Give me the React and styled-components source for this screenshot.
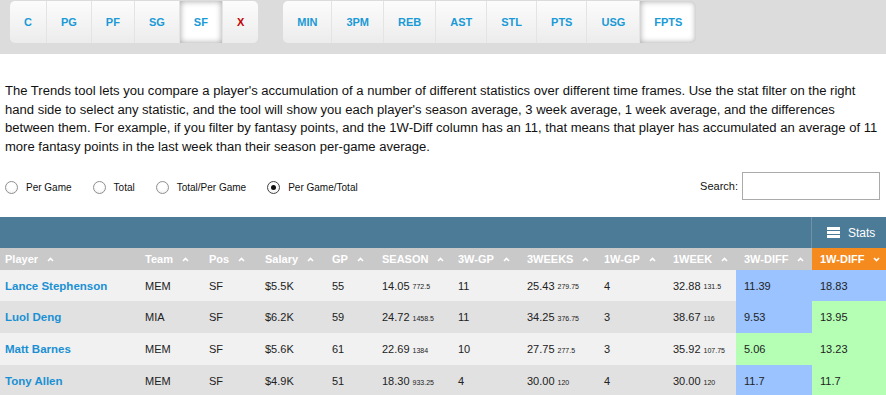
import React from "react";
import styled, { createGlobalStyle } from "styled-components";

const Global = createGlobalStyle`
  html, body { margin: 0; padding: 0; background: #fff; }
  body { font-family: "Liberation Sans", Arial, sans-serif; color: #222; }
  * { box-sizing: border-box; }
`;

const TopBar = styled.div`
  display: flex;
  gap: 25px;
  background: #dcdcdc;
  padding: 1px 10px 11px;
`;

const BtnGroup = styled.div`
  display: flex;
  height: 42px;
  border-radius: 5px;
  overflow: hidden;
  background: linear-gradient(#fcfcfc, #ececec);
`;

const SegBtn = styled.div`
  display: flex;
  align-items: center;
  justify-content: center;
  padding: 0 14px;
  font-size: 11px;
  font-weight: bold;
  color: ${(p) => (p.$danger ? "#c40000" : "#1a9ad6")};
  border-right: 1px solid #e4e4e4;
  background: ${(p) => (p.$active ? "#fff" : "transparent")};
  box-shadow: ${(p) => (p.$active ? "inset 0 0 6px rgba(0,0,0,0.38)" : "none")};
  &:last-child { border-right: none; }
`;

const Intro = styled.p`
  margin: 28px 3px 0 5px;
  font-size: 13.05px;
  line-height: 18.5px;
  color: #111;
`;

const Controls = styled.div`
  display: flex;
  align-items: center;
  justify-content: space-between;
  margin: 16px 6px 17px 5px;
  height: 28px;
`;

const RadioGroup = styled.div`
  display: flex;
  align-items: center;
  gap: 21px;
  padding-top: 3px;
`;

const RadioLabel = styled.label`
  display: flex;
  align-items: center;
  gap: 8px;
  font-size: 10px;
  color: #111;
`;

const Radio = styled.span`
  width: 13px;
  height: 13px;
  border-radius: 50%;
  border: 1px solid ${(p) => (p.$checked ? "#444" : "#909090")};
  background: radial-gradient(circle at 50% 40%, #fff 40%, #e8e8e8 100%);
  display: flex;
  align-items: center;
  justify-content: center;
  &::after {
    content: "";
    width: 5px;
    height: 5px;
    border-radius: 50%;
    background: ${(p) => (p.$checked ? "#111" : "transparent")};
  }
`;

const SearchWrap = styled.div`
  display: flex;
  align-items: center;
  gap: 4px;
  font-size: 11px;
  color: #111;
`;

const SearchInput = styled.input`
  width: 138px;
  height: 28px;
  border: 1px solid #aaa;
  padding: 2px 4px;
  outline: none;
`;

const TableBar = styled.div`
  display: flex;
  justify-content: flex-end;
  height: 31px;
  background: #4c7b98;
`;

const StatsBtn = styled.div`
  display: flex;
  align-items: center;
  gap: 8px;
  width: 75px;
  padding-left: 15px;
  border-left: 1px solid #6d93ab;
  color: #fff;
  font-size: 12px;
`;

const Grid = styled.div`
  display: grid;
  grid-template-columns: 137px 64px 56px 67px 50px 76px 69px 77px 69px 71px 76px 74px;
`;

const HeadCell = styled.div`
  display: flex;
  align-items: center;
  gap: 9px;
  height: 22px;
  padding-left: ${(p) => (p.$first ? "5px" : "8px")};
  background: ${(p) => (p.$sorted ? "#f58a1f" : "#c9c9c9")};
  color: #fff;
  font-size: 11px;
  font-weight: bold;
  white-space: nowrap;
`;

const Cell = styled.div`
  display: flex;
  align-items: center;
  height: ${(p) => p.$h};
  padding-left: ${(p) => (p.$first ? "5px" : "8px")};
  background: ${(p) =>
    p.$tone === "blue" ? "#9ac3ff" : p.$tone === "green" ? "#b4ffb4" : p.$odd ? "#e1e1e1" : "#f1f1f1"};
  font-size: 11px;
  color: #222;
  white-space: nowrap;
`;

const PlayerName = styled.span`
  color: #1a90d4;
  font-weight: bold;
  font-size: 11.5px;
`;

const Sub = styled.small`
  font-size: 7px;
  margin-left: 3px;
  position: relative;
  top: 1px;
`;

const Caret = ({ down }) => (
  <svg width="7" height="5" viewBox="0 0 7 5">
    <path
      d={down ? "M1 1 L3.5 3.5 L6 1" : "M1 4 L3.5 1.5 L6 4"}
      fill="none"
      stroke="#fff"
      strokeWidth="1.6"
    />
  </svg>
);

const BarsIcon = () => (
  <svg width="13" height="11" viewBox="0 0 13 11">
    <rect x="0" y="0" width="13" height="3" fill="#fff" />
    <rect x="0" y="4" width="13" height="3" fill="#fff" />
    <rect x="0" y="8" width="13" height="3" fill="#fff" />
  </svg>
);

const positions = ["C", "PG", "PF", "SG", "SF", "X"];
const stats = ["MIN", "3PM", "REB", "AST", "STL", "PTS", "USG", "FPTS"];
const headers = ["Player", "Team", "Pos", "Salary", "GP", "SEASON", "3W-GP", "3WEEKS", "1W-GP", "1WEEK", "3W-DIFF", "1W-DIFF"];

const rows = [
  ["Lance Stephenson", "MEM", "SF", "$5.5K", "55", ["14.05", "772.5"], "11", ["25.43", "279.75"], "4", ["32.88", "131.5"], ["11.39", "blue"], ["18.83", "blue"]],
  ["Luol Deng", "MIA", "SF", "$6.2K", "59", ["24.72", "1458.5"], "11", ["34.25", "376.75"], "3", ["38.67", "116"], ["9.53", "blue"], ["13.95", "green"]],
  ["Matt Barnes", "MEM", "SF", "$5.6K", "61", ["22.69", "1384"], "10", ["27.75", "277.5"], "3", ["35.92", "107.75"], ["5.06", "green"], ["13.23", "green"]],
  ["Tony Allen", "MEM", "SF", "$4.9K", "51", ["18.30", "933.25"], "4", ["30.00", "120"], "4", ["30.00", "120"], ["11.7", "blue"], ["11.7", "green"]],
];

const rowHeights = ["31px", "32px", "32px", "32px"];

const radios = ["Per Game", "Total", "Total/Per Game", "Per Game/Total"];

export default function App() {
  return (
    <>
      <Global />
      <TopBar>
        <BtnGroup>
          {positions.map((p) => (
            <SegBtn key={p} $active={p === "SF"} $danger={p === "X"}>{p}</SegBtn>
          ))}
        </BtnGroup>
        <BtnGroup>
          {stats.map((s) => (
            <SegBtn key={s} $active={s === "FPTS"}>{s}</SegBtn>
          ))}
        </BtnGroup>
      </TopBar>
      <Intro>
        The Trends tool lets you compare a player's accumulation of a number of different statistics over different time frames. Use the stat filter on the right hand side to select any statistic, and the tool will show you each player's season average, 3 week average, 1 week average, and the differences between them. For example, if you filter by fantasy points, and the 1W-Diff column has an 11, that means that player has accumulated an average of 11 more fantasy points in the last week than their season per-game average.
      </Intro>
      <Controls>
        <RadioGroup>
          {radios.map((r, i) => (
            <RadioLabel key={r}>
              <Radio $checked={i === 3} />
              {r}
            </RadioLabel>
          ))}
        </RadioGroup>
        <SearchWrap>
          Search:
          <SearchInput type="text" />
        </SearchWrap>
      </Controls>
      <TableBar>
        <StatsBtn>
          <BarsIcon />
          Stats
        </StatsBtn>
      </TableBar>
      <Grid>
        {headers.map((h, i) => (
          <HeadCell key={h} $first={i === 0} $sorted={h === "1W-DIFF"}>
            {h}
            <Caret down={h === "1W-DIFF"} />
          </HeadCell>
        ))}
        {rows.map((row, ri) =>
          row.map((v, ci) => {
            const h = rowHeights[ri];
            if (ci === 0)
              return (
                <Cell key={ci + "-" + ri} $first $odd={ri % 2 === 1} $h={h}>
                  <PlayerName>{v}</PlayerName>
                </Cell>
              );
            if (ci >= 10)
              return (
                <Cell key={ci + "-" + ri} $tone={v[1]} $h={h}>{v[0]}</Cell>
              );
            if (Array.isArray(v))
              return (
                <Cell key={ci + "-" + ri} $odd={ri % 2 === 1} $h={h}>
                  {v[0]}
                  <Sub>{v[1]}</Sub>
                </Cell>
              );
            return (
              <Cell key={ci + "-" + ri} $odd={ri % 2 === 1} $h={h}>{v}</Cell>
            );
          })
        )}
      </Grid>
    </>
  );
}
